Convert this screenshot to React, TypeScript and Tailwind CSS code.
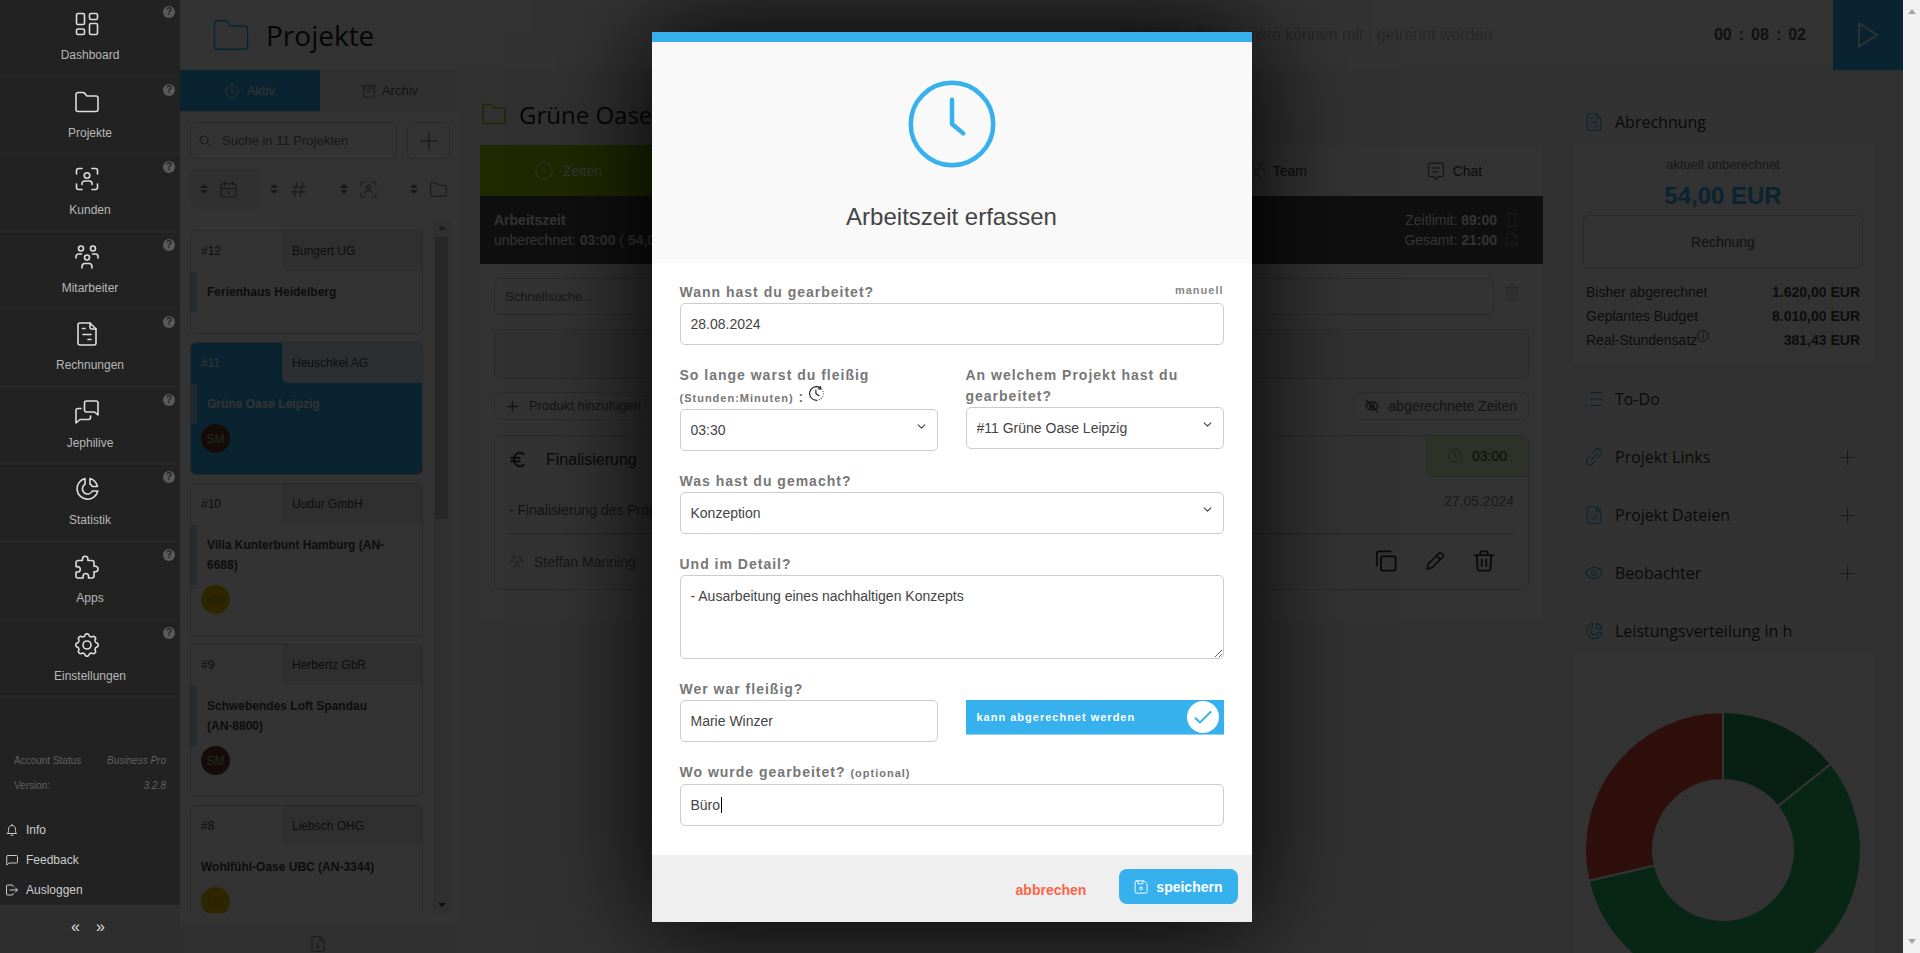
import type { ReactNode } from 'react'

type IconProps = { className?: string; strokeWidth?: number }

const Svg = ({ className, strokeWidth = 1.5, children }: IconProps & { children: ReactNode }) => (
  <svg
    viewBox="0 0 24 24"
    fill="none"
    stroke="currentColor"
    strokeWidth={strokeWidth}
    strokeLinecap="round"
    strokeLinejoin="round"
    className={className}
    aria-hidden="true"
  >
    {children}
  </svg>
)

const DashboardIcon = (p: IconProps) => (
  <Svg {...p}>
    <rect x="1.5" y="1.5" width="8" height="11" rx="1.5" />
    <rect x="14.5" y="1.5" width="8" height="6" rx="1.5" />
    <rect x="1.5" y="17" width="8" height="5.5" rx="1.5" />
    <rect x="14.5" y="11.5" width="8" height="11" rx="1.5" />
  </Svg>
)

const FolderIcon = (p: IconProps) => (
  <Svg {...p}>
    <path d="M1 4.5a2 2 0 0 1 2-2h5a2 2 0 0 1 1.4.6L12 6h9a2 2 0 0 1 2 2v11.5a2 2 0 0 1-2 2H3a2 2 0 0 1-2-2z" />
  </Svg>
)

const ClientIcon = (p: IconProps) => (
  <Svg {...p}>
    <path d="M7 1.5H3.5a2 2 0 0 0-2 2V7M17 1.5h3.5a2 2 0 0 1 2 2V7M7 22.5H3.5a2 2 0 0 1-2-2V17M17 22.5h3.5a2 2 0 0 0 2-2V17" />
    <circle cx="12" cy="8.5" r="2.8" />
    <path d="M7 17.5v-1A2.5 2.5 0 0 1 9.5 14h5a2.500 2.500 0 0 1 2.500 2.500v1" />
  </Svg>
)

const TeamIcon = (p: IconProps) => (
  <Svg {...p}>
    <circle cx="6" cy="3.5" r="2.5" />
    <circle cx="18" cy="3.5" r="2.5" />
    <circle cx="12" cy="12.5" r="2.5" />
    <path d="M1 13v-1.500A2.500 2.500 0 0 1 3.500 9h3M23 13v-1.500A2.500 2.500 0 0 0 20.500 9h-3" />
    <path d="M7 23v-1.500a3 3 0 0 1 3-3h4a3 3 0 0 1 3 3V23" />
  </Svg>
)

const InvoiceIcon = (p: IconProps) => (
  <Svg {...p}>
    <path d="M5 1h10l6 6v14a2 2 0 0 1-2 2H5a2 2 0 0 1-2-2V3a2 2 0 0 1 2-2z" />
    <path d="M15 1v4.5A1.5 1.5 0 0 0 16.5 7H21M7.500 6.500h2.500M8 12.500h8M13 17.500h3" />
  </Svg>
)

const BubblesIcon = (p: IconProps) => (
  <Svg {...p}>
    <path d="M9.500 3a2 2 0 0 1 2-2H21a2 2 0 0 1 2 2v12l-3.500-3h-8a2 2 0 0 1-2-2z" />
    <path d="M6 8.500H3a2 2 0 0 0-2 2V23l4-3.500h8.500a2 2 0 0 0 2-2V16" />
  </Svg>
)

const ChartIcon = (p: IconProps) => (
  <Svg {...p}>
    <path d="M10 1.500A10.500 10.500 0 1 0 22.800 14h-5.500A5.200 5.200 0 1 1 10 7.300z" />
    <path d="M15 1.500V7a6 6 0 0 1 2.200 2.500h5.300A11 11 0 0 0 15 1.500z" />
  </Svg>
)

const PuzzleIcon = (p: IconProps) => (
  <Svg {...p}>
    <path d="M7.500 5.500V4a2.700 2.700 0 0 1 5.400 0v1.500H17a2 2 0 0 1 2 2v3.800h1.300a2.700 2.700 0 0 1 0 5.400H19V21a2 2 0 0 1-2 2h-3.500v-1.800a2.700 2.700 0 0 0-5.400 0V23H3a2 2 0 0 1-2-2v-4h1.600a2.700 2.700 0 0 0 0-5.400H1V7.500a2 2 0 0 1 2-2z" />
  </Svg>
)

// eight rounded lobes around the hub
const gearPath = Array.from({ length: 96 }, (_, i) => {
  const a = (i / 96) * Math.PI * 2
  const r = 10.1 + 1.1 * Math.tanh(2 * Math.cos(8 * a))
  return `${i ? 'L' : 'M'}${(12 + r * Math.sin(a)).toFixed(2)} ${(12 - r * Math.cos(a)).toFixed(2)}`
}).join('') + 'z'

const GearIcon = (p: IconProps) => (
  <Svg {...p}>
    <path d={gearPath} />
    <circle cx="12" cy="12" r="4" />
  </Svg>
)

const ClockIcon = (p: IconProps) => (
  <Svg {...p}>
    <circle cx="12" cy="12" r="11" />
    <path d="M12 5.500V12l3 2.500" />
  </Svg>
)

const ArchiveIcon = (p: IconProps) => (
  <Svg {...p}>
    <path d="M1.500 2.500h21V7h-21zM3 7v13.500a2 2 0 0 0 2 2h14a2 2 0 0 0 2-2V7M9.500 12h5" />
  </Svg>
)

const SearchIcon = (p: IconProps) => (
  <Svg {...p}>
    <circle cx="10" cy="10" r="8" />
    <path d="m16 16 6.500 6.500" />
  </Svg>
)

const PlusIcon = (p: IconProps) => (
  <Svg {...p}>
    <path d="M12 1v22M1 12h22" />
  </Svg>
)

const CalendarIcon = (p: IconProps) => (
  <Svg {...p}>
    <path d="M3.500 4h17a2 2 0 0 1 2 2v14.500a2 2 0 0 1-2 2h-17a2 2 0 0 1-2-2V6a2 2 0 0 1 2-2zM1.500 10.500h21M6.500 1v5M17.500 1v5M11 15h1v3.500" />
  </Svg>
)

const HashIcon = (p: IconProps) => (
  <Svg {...p}>
    <path d="M10 2 6 22M18 2l-4 20M3 8.500h19M2 15.500h19" />
  </Svg>
)

const BellIcon = (p: IconProps) => (
  <Svg {...p}>
    <path d="M3 19h18c-2-2-2-4-2-8.500C19 6 16 3 12 3s-7 3-7 7.500C5 15 5 17 3 19zM12 3V1M10 22.500h4" />
  </Svg>
)

const FeedbackIcon = (p: IconProps) => (
  <Svg {...p}>
    <path d="M4 3h17a2 2 0 0 1 2 2v11a2 2 0 0 1-2 2H6l-4.500 4V5a2 2 0 0 1 2-2z" />
  </Svg>
)

const LogoutIcon = (p: IconProps) => (
  <Svg {...p}>
    <path d="M14 5V4a2 2 0 0 0-2-2H3a2 2 0 0 0-2 2v16a2 2 0 0 0 2 2h9a2 2 0 0 0 2-2v-1M8 12h15M19 8l4 4-4 4" />
  </Svg>
)

const TrashIcon = (p: IconProps) => (
  <Svg {...p}>
    <path d="M2 5.500h20M8 5.500V3a1.500 1.500 0 0 1 1.500-1.500h5A1.500 1.500 0 0 1 16 3v2.500M4 5.500l1 15.200a2 2 0 0 0 2 1.800h10a2 2 0 0 0 2-1.800l1-15.200M9.500 10.500v7M14.500 10.500v7" />
  </Svg>
)

const ChatIcon = (p: IconProps) => (
  <Svg {...p}>
    <path d="M4 1.500h16a2 2 0 0 1 2 2v14a2 2 0 0 1-2 2h-4.500L12 23l-3.500-3.500H4a2 2 0 0 1-2-2v-14a2 2 0 0 1 2-2zM7 8h10M7 13h7" />
  </Svg>
)

const HourglassIcon = (p: IconProps) => (
  <Svg {...p}>
    <path d="M4 1.500h16M4 22.500h16M5.500 1.500V6c0 4 4.500 4 4.500 6s-4.500 2-4.500 6v4.500M18.500 1.500V6c0 4-4.500 4-4.500 6s4.500 2 4.500 6v4.500" />
  </Svg>
)

const PdfIcon = (p: IconProps) => (
  <Svg {...p}>
    <path d="M3 12V3a2 2 0 0 1 2-2h10l6 6v5M15 1v6h6M2 23v-7h2.500a2 2 0 0 1 0 4H2M10 16v7h1.500a2.500 2.500 0 0 0 2.500-2.500v-2a2.500 2.500 0 0 0-2.500-2.500zM22 16h-4v7M18 19.500h3" />
  </Svg>
)

const EyeOffIcon = (p: IconProps) => (
  <Svg {...p}>
    <path d="M1.500 12C4 7.500 8 5 12 5s8 2.500 10.500 7C20 16.500 16 19 12 19s-8-2.500-10.500-7zM2 2l20 20" />
    <circle cx="12" cy="12" r="3.500" />
  </Svg>
)

const EyeIcon = (p: IconProps) => (
  <Svg {...p}>
    <path d="M1 12C3.500 7 8 4.500 12 4.500S20.500 7 23 12c-2.500 5-7 7.500-11 7.500S3.500 17 1 12z" />
    <circle cx="12" cy="12" r="3" />
  </Svg>
)

const EuroIcon = (p: IconProps) => (
  <Svg {...p}>
    <path d="M21 4.500A8.500 8.500 0 0 0 15.500 2.500C10.500 2.500 7 6.500 7 12s3.500 9.500 8.500 9.500A8.500 8.500 0 0 0 21 19.500M3 9.500h12M3 14.500h12" />
  </Svg>
)

const CopyIcon = (p: IconProps) => (
  <Svg {...p}>
    <rect x="6.500" y="7" width="16" height="15.500" rx="2" />
    <path d="M2 17V3.500a2 2 0 0 1 2-2h13" />
  </Svg>
)

const PencilIcon = (p: IconProps) => (
  <Svg {...p}>
    <path d="M2.500 21.500 4 15.500 16.500 3a2.500 2.500 0 0 1 3.500 0l1 1a2.500 2.500 0 0 1 0 3.500L8.500 20zM14 5.500l4.500 4.500" />
  </Svg>
)

const ListIcon = (p: IconProps) => (
  <Svg {...p}>
    <path d="M7 3.500h15M7 12h15M7 20.500h15M1.500 3.500H2M1.500 12H2M1.500 20.500H2" />
  </Svg>
)

const LinkIcon = (p: IconProps) => (
  <Svg {...p}>
    <path d="m8 16 8-8M10.500 6l3.300-3.300a4.800 4.800 0 0 1 7 0 4.800 4.800 0 0 1 0 7L17.500 13M13.500 18l-3.300 3.300a4.800 4.800 0 0 1-7 0 4.800 4.800 0 0 1 0-7L6.500 11" />
  </Svg>
)

const FileCheckIcon = (p: IconProps) => (
  <Svg {...p}>
    <path d="M5 1h10l6 6v14a2 2 0 0 1-2 2H5a2 2 0 0 1-2-2V3a2 2 0 0 1 2-2zM15 1v6h6M8 14.500l3 3 5-5.500" />
  </Svg>
)

const FileDownIcon = (p: IconProps) => (
  <Svg {...p}>
    <path d="M5 1h10l6 6v14a2 2 0 0 1-2 2H5a2 2 0 0 1-2-2V3a2 2 0 0 1 2-2zM15 1v6h6M12 10v8.500M8.500 15l3.500 3.500 3.500-3.500" />
  </Svg>
)

const SaveIcon = (p: IconProps) => (
  <Svg {...p}>
    <path d="M4 1.500h13.500L22.500 7v13.500a2 2 0 0 1-2 2H4a2 2 0 0 1-2-2v-17a2 2 0 0 1 2-2zM7 1.500v5h8v-5" />
    <circle cx="12" cy="14.500" r="2.500" />
  </Svg>
)

const ChevronIcon = (p: IconProps) => (
  <Svg {...p}>
    <path d="m3 7.500 9 9 9-9" />
  </Svg>
)

// solid on the left, dotted on the right
const TimerIcon = (p: IconProps) => (
  <Svg {...p}>
    <path d="M12 23A11 11 0 1 1 17 2.200M18.500 1v3.500H15M11 6.500V12l5 3.500" />
    <path d="M20.500 5A11 11 0 0 1 12 23" strokeDasharray="0 4" />
  </Svg>
)

const HelpBadge = ({ label }: { label: string }) => (
  <button type="button" aria-label={label} className="absolute top-[6px] right-[5px] flex size-3 items-center justify-center rounded-full bg-[#5a5a5a] text-[10px] leading-none font-bold text-[#222]">
    ?
  </button>
)

const navItems = [
  { label: 'Dashboard', icon: DashboardIcon },
  { label: 'Projekte', icon: FolderIcon },
  { label: 'Kunden', icon: ClientIcon },
  { label: 'Mitarbeiter', icon: TeamIcon },
  { label: 'Rechnungen', icon: InvoiceIcon },
  { label: 'Jephilive', icon: BubblesIcon },
  { label: 'Statistik', icon: ChartIcon },
  { label: 'Apps', icon: PuzzleIcon },
  { label: 'Einstellungen', icon: GearIcon },
]

const footerLinks = [
  { label: 'Info', icon: BellIcon },
  { label: 'Feedback', icon: FeedbackIcon },
  { label: 'Ausloggen', icon: LogoutIcon },
]

const Sidebar = () => (
  <aside className="z-20 flex w-[180px] shrink-0 flex-col bg-[#222] text-[#b8b8b8]">
    <nav className="flex h-[698px] shrink-0 flex-col">
      {navItems.map(({ label, icon: Icon }) => (
        <div key={label} className="relative flex-1 border-b-[3px] border-[#272727]">
          <a href="#" className="flex flex-col items-center pt-3 text-xs">
            <Icon className="mr-[6px] size-6 text-[#ddd]" strokeWidth={1.6} />
            <span className="mt-[9px] leading-5">{label}</span>
          </a>
          <HelpBadge label={`Hilfe ${label}`} />
        </div>
      ))}
    </nav>
    <dl className="mt-[53px] grid grid-cols-2 gap-y-[5px] px-[14px] text-[10px] leading-5 text-[#606060]">
      <dt className="whitespace-nowrap">Account Status</dt>
      <dd className="text-right italic">Business Pro</dd>
      <dt>Version:</dt>
      <dd className="text-right italic">3.2.8</dd>
    </dl>
    <div className="mt-auto flex flex-col">
      {footerLinks.map(({ label, icon: Icon }) => (
        <a key={label} href="#" className="flex h-[30px] items-center gap-2 pl-[6px] text-xs text-[#ccc]">
          <Icon className="size-3" strokeWidth={2} />
          {label}
        </a>
      ))}
    </div>
    <div className="flex h-12 items-center justify-center gap-4 bg-[#2e2e2e] pr-1 text-base leading-none text-[#ddd]">
      <button type="button" aria-label="Menü einklappen" className="pb-1">«</button>
      <button type="button" aria-label="Menü ausklappen" className="pb-1">»</button>
    </div>
  </aside>
)

const SortArrows = () => (
  <svg viewBox="0 0 8 12" className="h-3 w-2" fill="#777" aria-hidden="true">
    <path d="M0 5 4 1l4 4zM0 7l4 4 4-4z" />
  </svg>
)

const projects = [
  { no: '#12', client: 'Bungert UG', title: 'Ferienhaus Heidelberg', marked: true },
  { no: '#11', client: 'Heuschkel AG', title: 'Grüne Oase Leipzig', marked: true, active: true, user: 'SM', color: 'bg-[#6b3a2a] text-[#bba]' },
  { no: '#10', client: 'Uudur GmbH', title: 'Villa Kunterbunt Hamburg (AN-6688)', marked: true, user: 'MW', color: 'bg-[#ecbc00] text-[#a08a20]' },
  { no: '#9', client: 'Herbertz GbR', title: 'Schwebendes Loft Spandau (AN-8800)', marked: true, user: 'SM', color: 'bg-[#6b3a2a] text-[#bba]' },
  { no: '#8', client: 'Liebsch OHG', title: 'Wohlfühl-Oase UBC (AN-3344)', marked: false, user: 'NS', color: 'bg-[#ecbc00] text-[#a08a20]' },
]

const ProjectCard = ({ project: p }: { project: (typeof projects)[number] }) => (
  <li className={`shrink-0 overflow-hidden rounded-md border border-[#ccc] pb-[21px] text-xs ${p.active ? 'bg-[#36b1ee] text-white' : 'bg-white text-[#444]'}`}>
    <div className="flex h-10 leading-10">
      <span className="w-[91px] shrink-0 pl-[10px]">{p.no}</span>
      <span className={`flex-1 rounded-bl-md pl-[10px] text-[#444] ${p.active ? 'bg-[#d5ecf7]' : 'bg-[#ebebeb]'}`}>{p.client}</span>
    </div>
    <div className={`mt-px py-[10px] pr-8 leading-5 font-bold ${p.marked ? 'border-l-[6px] pl-[10px]' : 'pl-[10px]'} ${p.active ? 'border-[#9bcbe5]' : 'border-[#b6dcf0]'}`}>
      {p.title}
    </div>
    {p.user && (
      <span className={`ml-[10px] flex size-[29px] items-center justify-center rounded-full ${p.color}`}>{p.user}</span>
    )}
  </li>
)

const sorters = [
  { label: 'Datum', icon: CalendarIcon },
  { label: 'Nummer', icon: HashIcon },
  { label: 'Kunde', icon: ClientIcon },
  { label: 'Projekt', icon: FolderIcon },
]

const ProjectColumn = () => (
  <section className="flex w-[280px] shrink-0 flex-col bg-[#fcfcfc]">
    <div className="flex h-[42px] shrink-0 border-b border-[#e4e4e4] text-[13px]">
      <button type="button" className="flex flex-1 items-center justify-center gap-2 bg-[#36b1ee] text-white">
        <ClockIcon className="size-[14px]" />
        Aktiv
      </button>
      <button type="button" className="flex flex-1 items-center justify-center gap-[6px] bg-[#f0f0f0] text-[#666]">
        <ArchiveIcon className="size-[14px]" />
        Archiv
      </button>
    </div>
    <div className="flex gap-[10px] px-[10px] pt-[10px]">
      <label className="flex h-[37px] min-w-0 flex-1 items-center gap-[11px] rounded-md border border-[#ccc] px-2 text-[#777]">
        <SearchIcon className="size-3 shrink-0" strokeWidth={2} />
        <input placeholder="Suche in 11 Projekten" aria-label="Projektsuche" className="w-full min-w-0 text-[13px] outline-none placeholder:text-[#777]" />
      </label>
      <button type="button" aria-label="Projekt anlegen" className="flex h-[37px] w-[43px] items-center justify-center rounded-md border border-[#ccc] text-[#666]">
        <PlusIcon className="size-[18px]" />
      </button>
    </div>
    <div className="mt-[10px] grid h-10 shrink-0 grid-cols-[70px_70px_70px_60px] pl-[10px] text-[#777]">
      {sorters.map(({ label, icon: Icon }, i) => (
        <button key={label} type="button" aria-label={`Sortieren nach ${label}`} className={`flex items-center gap-3 pl-[10px] ${i === 0 ? 'rounded-md bg-[#eee]' : ''}`}>
          <SortArrows />
          <Icon className="size-[17px]" />
        </button>
      ))}
    </div>
    <div className="mt-[11px] mr-[10px] mb-[10px] flex min-h-0 flex-1 justify-between pl-[10px]">
      <ul className="flex w-[233px] flex-col gap-2 overflow-hidden pt-[10px]">
        {projects.map((p) => (
          <ProjectCard key={p.no} project={p} />
        ))}
      </ul>
      <div className="flex w-[17px] flex-col items-center justify-between bg-[#f1f1f1] py-[6px]">
        <svg viewBox="0 0 8 4" className="h-1 w-2" fill="#888" aria-hidden="true"><path d="m0 4 4-4 4 4z" /></svg>
        <div className="mt-[7px] mb-auto h-[282px] w-[13px] bg-[#c1c1c1]" />
        <svg viewBox="0 0 8 4" className="h-1 w-2" fill="#444" aria-hidden="true"><path d="m0 0 4 4 4-4z" /></svg>
      </div>
    </div>
    <div className="flex h-[30px] shrink-0 justify-center overflow-hidden bg-[#eee] pt-[13px] pr-1 text-[#777]">
      <button type="button" aria-label="Export" className="h-4">
        <FileDownIcon className="size-4" />
      </button>
    </div>
  </section>
)

const Header = () => (
  <header className="flex h-[70px] shrink-0 items-center bg-[#fdfdfd]">
    <FolderIcon className="ml-[33px] size-9 text-[#36b1ee]" strokeWidth={1} />
    <h1 className="ml-[17px] font-['Open_Sans',sans-serif] text-[28px] text-[#222]">Projekte</h1>
    <input
      placeholder="Notizen – Stichpunkte können mit ; getrennt werden"
      aria-label="Notizen"
      className="ml-auto h-full w-[578px] px-4 text-base outline-none placeholder:text-[#c4c4c4]"
    />
    <div className="flex gap-[7px] px-[27px] text-base font-bold text-[#555]">
      <span>00</span>
      <span>:</span>
      <span>08</span>
      <span>:</span>
      <span>02</span>
    </div>
    <button type="button" aria-label="Zeit starten" className="flex h-full w-[70px] items-center justify-center bg-[#36b1ee] text-white">
      <svg viewBox="0 0 24 28" className="h-7 w-6" fill="none" stroke="currentColor" strokeWidth="1.8" strokeLinejoin="round" aria-hidden="true">
        <path d="M3 2.500v23L21.500 14z" />
      </svg>
    </button>
  </header>
)

const ProjectDetail = () => (
  <section className="min-w-0 flex-1 pt-[27px] pr-[30px] pl-5">
    <h2 className="flex h-12 items-start gap-[13px] font-['Open_Sans',sans-serif] text-2xl leading-9 text-[#222]">
      <FolderIcon className="mt-[5px] ml-[2px] size-6 text-[#99cc00]" />
      Grüne Oase Leipzig
    </h2>
    <div className="grid h-[51px] grid-cols-6 bg-[#fcfcfc] text-sm text-[#444]">
      <button type="button" className="flex items-center justify-center gap-[10px] bg-[#99cc00] text-white">
        <ClockIcon className="size-[18px]" strokeWidth={1.3} />
        Zeiten
      </button>
      <button type="button" className="col-start-5 flex items-center justify-center gap-2">
        <TeamIcon className="size-[17px] text-[#888]" />
        Team
      </button>
      <button type="button" className="flex items-center justify-center gap-2">
        <ChatIcon className="size-[18px] text-[#666]" />
        Chat
      </button>
    </div>
    <div className="flex h-[68px] items-center justify-between bg-[#4b4b4b] px-[14px] text-sm leading-5 text-white">
      <div>
        <p className="font-bold">Arbeitszeit</p>
        <p>unberechnet: <b>03:00</b> ( <b>54,00 EUR</b> )</p>
      </div>
      <div className="pr-[10px]">
        <p className="flex items-center justify-end gap-2">
          <span>Zeitlimit: <b>89:00</b></span>
          <HourglassIcon className="size-[14px] text-[#999]" />
        </p>
        <p className="flex items-center justify-end gap-2">
          <span>Gesamt: <b>21:00</b></span>
          <PdfIcon className="size-[14px] text-[#999]" />
        </p>
      </div>
    </div>
    <div className="bg-[#fcfcfc] px-[14px] pt-[14px] pb-[30px]">
      <div className="flex items-start">
        <input placeholder="Schnellsuche..." aria-label="Schnellsuche" className="h-[37px] min-w-0 flex-1 rounded-md border border-[#ccc] px-[10px] text-[13px] outline-none placeholder:text-[#777]" />
        <button type="button" aria-label="Suche leeren" className="mt-[6px] mr-[9px] ml-[10px] text-[#bbb]">
          <TrashIcon className="size-4" />
        </button>
      </div>
      <button type="button" aria-label="Arbeitszeit erfassen" className="mt-[14px] block h-[50px] w-full rounded-md border border-[#ccc] bg-[#f6f6f6]" />
      <div className="mt-[13px] flex justify-between text-[13px] text-[#666]">
        <button type="button" className="flex h-7 items-center gap-[11px] rounded-md border border-[#d4d4d4] px-3">
          <PlusIcon className="size-[11px]" strokeWidth={3} />
          Produkt hinzufügen
        </button>
        <button type="button" className="flex h-7 items-center gap-[10px] rounded-md border border-[#d4d4d4] px-[11px] text-sm">
          <EyeOffIcon className="size-[14px] text-[#444]" strokeWidth={2} />
          abgerechnete Zeiten
        </button>
      </div>
      <article className="mt-[15px] rounded-md border border-[#ccc] pl-[14px] text-sm text-[#777]">
        <div className="flex h-[41px] justify-between">
          <h3 className="flex items-center gap-5 pt-[6px] text-base text-[#333]">
            <EuroIcon className="size-[17px] text-[#444]" strokeWidth={3} />
            Finalisierung
          </h3>
          <span className="flex w-[102px] items-center justify-center gap-[10px] rounded-bl-md border-b border-l border-[#ccc] bg-[#e7f2c4] text-[#444]">
            <ClockIcon className="size-[14px] text-[#8a9a60]" />
            03:00
          </span>
        </div>
        <div className="mr-[14px] flex h-[57px] justify-between border-b border-[#bbb]">
          <p className="pt-[23px] text-[#666]">- Finalisierung des Projekts</p>
          <time className="pt-[14px] text-[#888]">27.05.2024</time>
        </div>
        <div className="flex h-[55px] items-center justify-between pr-[33px]">
          <span className="flex items-center gap-[10px] pl-px">
            <TeamIcon className="size-[14px] text-[#999]" />
            Steffan Manning
          </span>
          <span className="flex gap-7 pb-[2px] text-[#333]">
            <button type="button" aria-label="Kopieren"><CopyIcon className="size-[22px]" strokeWidth={2} /></button>
            <button type="button" aria-label="Bearbeiten"><PencilIcon className="size-5" strokeWidth={2} /></button>
            <button type="button" aria-label="Löschen"><TrashIcon className="size-[22px]" strokeWidth={2} /></button>
          </span>
        </div>
      </article>
    </div>
  </section>
)

const billing = [
  { label: 'Bisher abgerechnet', value: '1.620,00 EUR' },
  { label: 'Geplantes Budget', value: '8.010,00 EUR' },
  { label: 'Real-Stundensatz', value: '381,43 EUR', info: true },
]

const panels = [
  { label: 'To-Do', icon: ListIcon, add: false },
  { label: 'Projekt Links', icon: LinkIcon, add: true },
  { label: 'Projekt Dateien', icon: FileCheckIcon, add: true },
  { label: 'Beobachter', icon: EyeIcon, add: true },
  { label: 'Leistungsverteilung in h', icon: ChartIcon, add: false },
]

const slices = [
  { from: 0, to: 1 / 7, color: '#27a05f' },
  { from: 1 / 7, to: 5 / 7, color: '#23be6e' },
  { from: 5 / 7, to: 1, color: '#e74c3c' },
]

const arc = (from: number, to: number) => {
  const pt = (r: number, t: number) =>
    `${(140 + r * Math.sin(t * 2 * Math.PI)).toFixed(2)} ${(140 - r * Math.cos(t * 2 * Math.PI)).toFixed(2)}`
  const large = to - from > 0.5 ? 1 : 0
  return `M${pt(138, from)}A138 138 0 ${large} 1 ${pt(138, to)}L${pt(70, to)}A70 70 0 ${large} 0 ${pt(70, from)}z`
}

const Widgets = () => (
  <aside className="flex w-[330px] shrink-0 flex-col gap-[14px] overflow-hidden pt-[30px] pr-[30px] text-sm text-[#444]">
    <section className="bg-[#fdfdfd]">
      <h3 className="flex h-11 items-center gap-3 bg-[#fafafa] pl-3 font-['Open_Sans',sans-serif] text-base text-[#333]">
        <InvoiceIcon className="size-[18px] text-[#36b1ee]" />
        Abrechnung
      </h3>
      <div className="px-[10px] pb-[13px] text-center">
        <p className="pt-[11px] text-[13px] leading-5 text-[#777]">aktuell unberechnet</p>
        <p className="pt-[3px] text-2xl leading-9 font-bold text-[#36b1ee]">54,00 EUR</p>
        <button type="button" className="mt-px block h-[54px] w-full rounded-md border border-[#ccc] text-[#555]">Rechnung</button>
        <dl className="grid grid-cols-[auto_auto] justify-between gap-y-1 px-[3px] pt-[13px] text-left leading-5">
          {billing.map((row) => (
            <div key={row.label} className="contents">
              <dt className="flex">
                {row.label}
                {row.info && <span className="flex size-3 items-center justify-center rounded-full border border-[#555] text-[9px] leading-none">i</span>}
              </dt>
              <dd className="text-right font-bold">{row.value}</dd>
            </div>
          ))}
        </dl>
      </div>
    </section>
    {panels.map(({ label, icon: Icon, add }) => (
      <section key={label} className="flex h-11 shrink-0 items-center bg-[#fbfbfb]">
        <h3 className="flex flex-1 items-center gap-3 pl-3 font-['Open_Sans',sans-serif] text-base text-[#333]">
          <Icon className="size-[18px] text-[#36b1ee]" />
          {label}
        </h3>
        {add && (
          <button type="button" aria-label={`${label} hinzufügen`} className="flex h-full w-[53px] items-center justify-center border-l border-[#e8e8e8] text-[#777]">
            <PlusIcon className="size-[15px]" />
          </button>
        )}
      </section>
    ))}
    <div className="-mt-[14px] flex shrink-0 justify-center bg-[#fdfdfd] pt-[57px]">
      <svg viewBox="0 0 280 280" className="size-[280px]" role="img" aria-label="Leistungsverteilung">
        {slices.map((s) => (
          <path key={s.color} d={arc(s.from, s.to)} fill={s.color} stroke="#fff" strokeWidth="2" />
        ))}
      </svg>
    </div>
  </aside>
)

const fieldClass = 'block h-[42px] w-full appearance-none rounded-[5px] border border-[#ccc] bg-white px-[10px] text-sm text-[#444] outline-none'
const labelClass = 'block text-sm leading-[21px] font-bold tracking-[1px] text-[#777]'

const SelectField = ({ id, value }: { id: string; value: string }) => (
  <div className="relative">
    <select id={id} defaultValue={value} className={fieldClass}>
      <option>{value}</option>
    </select>
    <ChevronIcon className="pointer-events-none absolute top-[13px] right-3 size-[9px] text-[#444]" strokeWidth={3} />
  </div>
)

const TimeModal = () => (
  <form role="dialog" aria-labelledby="modal-title" className="w-[600px] max-w-full border-t-[10px] border-[#36b1ee] bg-white shadow-[0_0_100px_#000]">
    <div className="flex flex-col items-center bg-[#f9f9f9] pt-[37px] pb-[28px]">
      <ClockIcon className="size-[90px] text-[#36b1ee]" strokeWidth={1.2} />
      <h2 id="modal-title" className="mt-[30px] text-2xl leading-9 text-[#444]">Arbeitszeit erfassen</h2>
    </div>
    <div className="flex flex-col gap-5 px-7 pt-[19px] pb-[29px]">
      <div>
        <div className="flex items-start justify-between">
          <label htmlFor="date" className={labelClass}>Wann hast du gearbeitet?</label>
          <button type="button" className="text-[11px] leading-4 font-bold tracking-[1px] text-[#888]">manuell</button>
        </div>
        <input id="date" defaultValue="28.08.2024" className={fieldClass} />
      </div>
      <div className="grid grid-cols-2 gap-7">
        <div>
          <label htmlFor="duration" className={labelClass}>
            So lange warst du fleißig
            <span className="flex h-[23px] items-center gap-[5px]">
              <span><small className="text-[11px]">(Stunden:Minuten)</small> :</span>
              <TimerIcon className="mb-2 size-[15px] text-[#222]" strokeWidth={1.8} />
            </span>
          </label>
          <SelectField id="duration" value="03:30" />
        </div>
        <div>
          <label htmlFor="project" className={labelClass}>An welchem Projekt hast du gearbeitet?</label>
          <SelectField id="project" value="#11 Grüne Oase Leipzig" />
        </div>
      </div>
      <div>
        <label htmlFor="task" className={labelClass}>Was hast du gemacht?</label>
        <SelectField id="task" value="Konzeption" />
      </div>
      <div>
        <label htmlFor="detail" className={labelClass}>Und im Detail?</label>
        <textarea
          id="detail"
          defaultValue="- Ausarbeitung eines nachhaltigen Konzepts"
          className="block h-[84px] w-full resize rounded-[5px] border border-[#ccc] px-[10px] py-[10px] text-sm text-[#444] outline-none"
        />
      </div>
      <div className="grid grid-cols-2 gap-7">
        <div>
          <label htmlFor="worker" className={labelClass}>Wer war fleißig?</label>
          <input id="worker" defaultValue="Marie Winzer" className={fieldClass} />
        </div>
        <label className="mt-[21px] flex h-[35px] items-center justify-between border-b border-[#8fd2f5] bg-[#36b1ee] pr-[5px] pl-[11px] text-[11px] font-bold tracking-[1px] text-white">
          kann abgerechnet werden
          <input type="checkbox" defaultChecked className="peer sr-only" />
          <span className="flex size-8 items-center justify-center rounded-full bg-white text-[#36b1ee]">
            <svg viewBox="0 0 24 24" className="size-5" fill="none" stroke="currentColor" strokeWidth="2.400" strokeLinecap="round" strokeLinejoin="round" aria-hidden="true">
              <path d="m3 13.500 5.500 5L21 6" />
            </svg>
          </span>
        </label>
      </div>
      <div>
        <label htmlFor="place" className={labelClass}>
          Wo wurde gearbeitet? <small className="text-[11px]">(optional)</small>
        </label>
        <div className="relative">
          <input id="place" defaultValue="Büro" className={fieldClass} />
          <span className="absolute top-[13px] left-[41px] h-4 w-px bg-black" />
        </div>
      </div>
    </div>
    <div className="flex h-[67px] items-start justify-end gap-[33px] bg-[#efefef] pt-[14px] pr-[14px] text-sm font-bold">
      <button type="button" className="mt-[11px] leading-5 text-[#ff6347]">abbrechen</button>
      <button type="submit" className="flex h-[35px] items-center gap-2 rounded-lg bg-[#36b1ee] px-[15px] text-white">
        <SaveIcon className="size-[14px]" strokeWidth={1.6} />
        speichern
      </button>
    </div>
  </form>
)

const App = () => (
  <div className="relative flex h-screen overflow-hidden bg-[#f6f6f6] font-['Liberation_Sans',Arial,sans-serif]">
    <Sidebar />
    <div className="flex min-w-0 flex-1 flex-col">
      <Header />
      <main className="flex min-h-0 flex-1">
        <ProjectColumn />
        <ProjectDetail />
        <Widgets />
      </main>
    </div>
    <div className="z-20 flex w-[17px] shrink-0 flex-col items-center justify-between bg-[#f1f1f1] py-[9px]">
      <svg viewBox="0 0 8 5" className="h-[5px] w-2" fill="#a3a3a3" aria-hidden="true"><path d="m0 5 4-5 4 5z" /></svg>
      <svg viewBox="0 0 8 5" className="h-[5px] w-2" fill="#a3a3a3" aria-hidden="true"><path d="m0 0 4 5 4-5z" /></svg>
    </div>
    <div className="absolute inset-y-0 right-[17px] left-0 z-10 flex items-start justify-center bg-black/80 pt-8">
      <TimeModal />
    </div>
  </div>
)

export default App
